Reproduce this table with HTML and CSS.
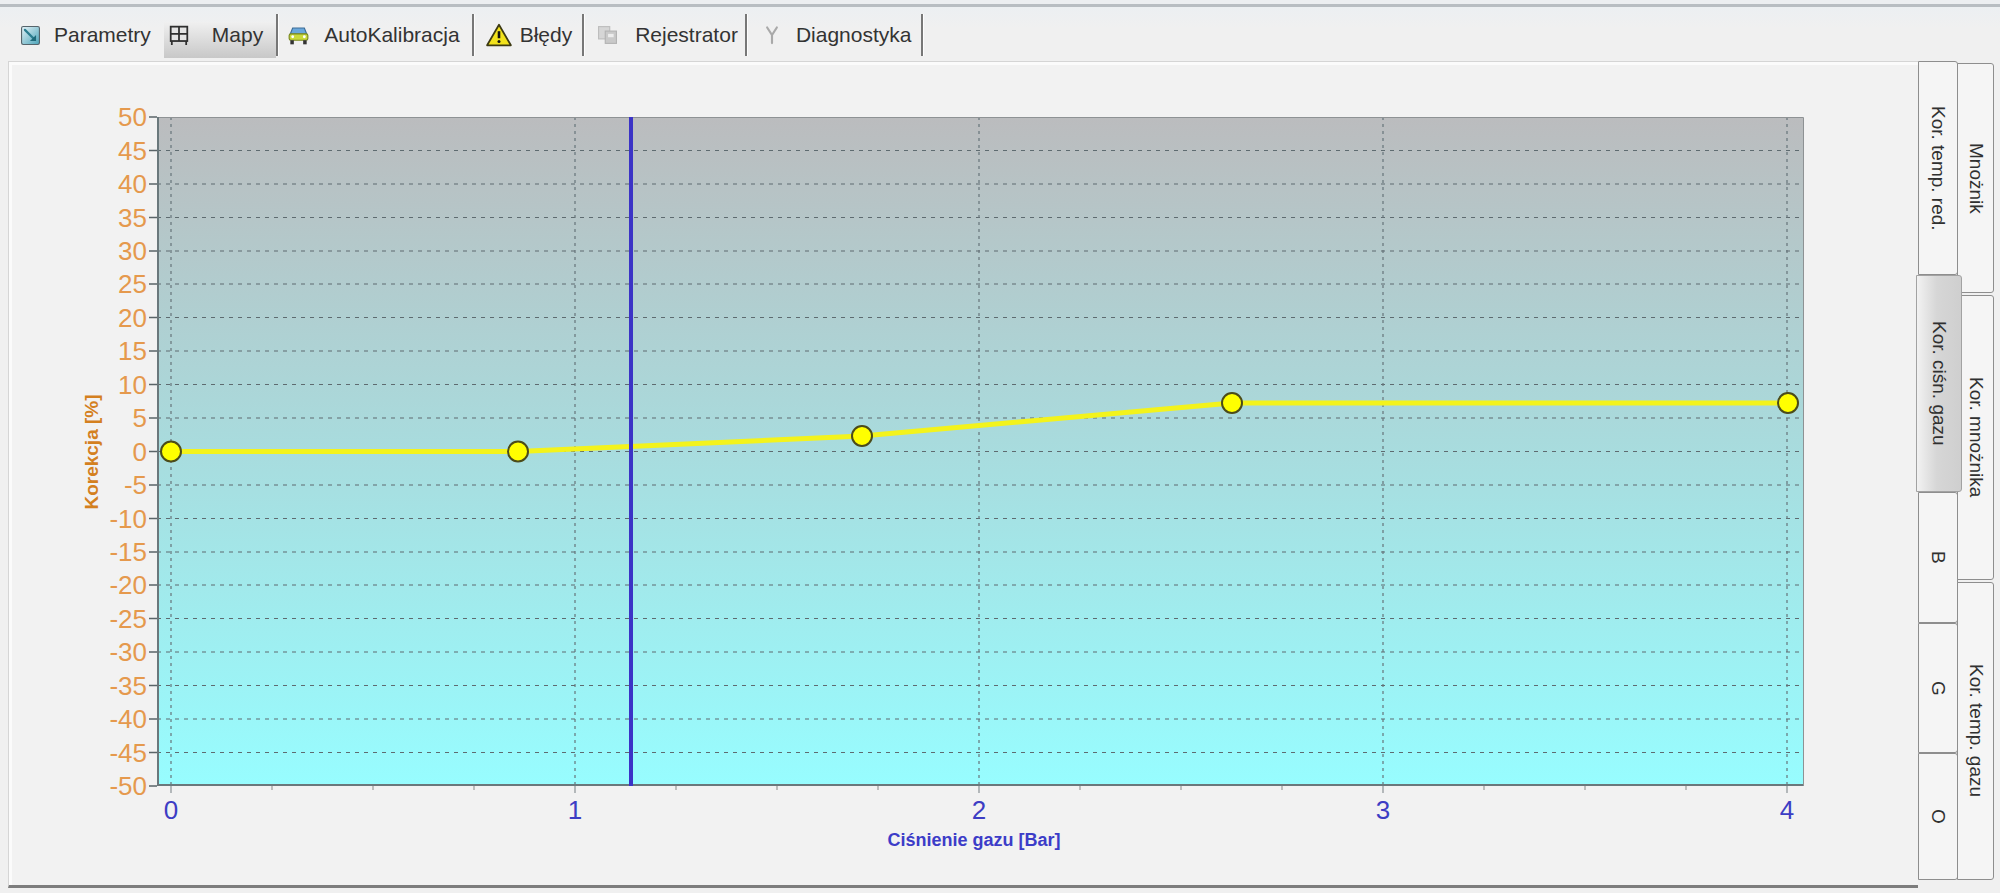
FILE: index.html
```html
<!DOCTYPE html>
<html lang="pl">
<head>
<meta charset="utf-8">
<title>Mapy</title>
<link rel="stylesheet" href="styles.css">
</head>
<body>
<div class="topbar"></div>
<div class="tabstrip">
  <div class="tab t-param">
    <svg class="ico" width="19" height="19" viewBox="0 0 17 17">
      <defs><linearGradient id="gp" x1="0" y1="0" x2="1" y2="1"><stop offset="0" stop-color="#e6f3f8"/><stop offset="1" stop-color="#4aa3b8"/></linearGradient></defs>
      <rect x="0.5" y="0.5" width="16" height="16" rx="1.5" fill="url(#gp)" stroke="#56646b"/>
      <path d="M3.5 3.5L11 11" stroke="#2b7d8f" stroke-width="2" stroke-linecap="round"/>
      <path d="M8 13.5H13.5V8Z" fill="#1f6a7a"/>
    </svg>
    <span>Parametry</span>
  </div>
  <div class="tab t-mapy">
    <svg class="ico" width="20" height="21" viewBox="0 0 18 19">
      <rect x="1.5" y="1.5" width="15" height="13" fill="#e4e4e4" stroke="#2f2f2f" stroke-width="1.6"/>
      <path d="M9 1.5V14.5M1.5 8H16.5M2.5 14.5V18M15.5 14.5V18" stroke="#2f2f2f" stroke-width="1.6"/>
    </svg>
    <span>Mapy</span>
  </div>
  <div class="sep"></div>
  <div class="tab t-auto">
    <svg class="ico" width="21" height="20" viewBox="0 0 18 17">
      <path d="M4 2.5h10l2 5H2z" fill="#6aa8dc" stroke="#3c6c96"/>
      <rect x="1" y="7.5" width="16" height="5.5" rx="1.5" fill="#c9d93a" stroke="#7c8a20"/>
      <rect x="2" y="13" width="3" height="3.5" fill="#333"/>
      <rect x="13" y="13" width="3" height="3.5" fill="#333"/>
      <circle cx="4" cy="10" r="1.2" fill="#fff"/>
      <circle cx="14" cy="10" r="1.2" fill="#fff"/>
    </svg>
    <span>AutoKalibracja</span>
  </div>
  <div class="sep"></div>
  <div class="tab t-bledy">
    <svg class="ico" width="26" height="24" viewBox="0 0 24 22">
      <path d="M12 1.5L23 20.5H1Z" fill="#f2e21c" stroke="#3d3a12" stroke-width="1.6" stroke-linejoin="round"/>
      <path d="M12 7.5V14" stroke="#111" stroke-width="2.4"/>
      <circle cx="12" cy="17" r="1.4" fill="#111"/>
    </svg>
    <span>Błędy</span>
  </div>
  <div class="sep"></div>
  <div class="tab t-rej">
    <svg class="ico" width="19" height="18" viewBox="0 0 17 16">
      <rect x="0.5" y="0.5" width="10" height="11" fill="#d6d6d6" stroke="#bdbdbd"/>
      <rect x="6.5" y="4.5" width="10" height="11" fill="#c9c9c9" stroke="#b3b3b3"/>
      <rect x="9" y="7" width="5" height="3" fill="#ededed"/>
    </svg>
    <span>Rejestrator</span>
  </div>
  <div class="sep"></div>
  <div class="tab t-diag">
    <svg class="ico" width="14" height="20" viewBox="0 0 13 18">
      <path d="M2 2L6.5 9L11 2M6.5 9V16.5" fill="none" stroke="#a9a9a9" stroke-width="2" stroke-linecap="round"/>
    </svg>
    <span>Diagnostyka</span>
  </div>
  <div class="sep"></div>
</div>

<div class="workarea">
  <div class="panel">
    <svg class="chart" width="1909" height="823" viewBox="9 62 1909 823">
      <defs>
        <linearGradient id="plotbg" x1="0" y1="0" x2="0" y2="1">
          <stop offset="0" stop-color="#bbbcbe"/>
          <stop offset="0.5" stop-color="#a8dcde"/>
          <stop offset="1" stop-color="#97fdff"/>
        </linearGradient>
      </defs>
      <rect x="157" y="117" width="1646" height="669" fill="url(#plotbg)"/>
      <path class="hgrid" d="M157 150.5H1803M157 184H1803M157 217.5H1803M157 251H1803M157 284H1803M157 317.5H1803M157 351H1803M157 384.5H1803M157 418H1803M157 451.5H1803M157 485H1803M157 518.5H1803M157 552H1803M157 585H1803M157 618.5H1803M157 652H1803M157 685.5H1803M157 719H1803M157 752.5H1803"/>
      <path class="vgrid" d="M171 117V786M575 117V786M979 117V786M1383 117V786M1787 117V786"/>
      <path class="ytick" d="M149 117h8M149 150.5h8M149 184h8M149 217.5h8M149 251h8M149 284h8M149 317.5h8M149 351h8M149 384.5h8M149 418h8M149 451.5h8M149 485h8M149 518.5h8M149 552h8M149 585h8M149 618.5h8M149 652h8M149 685.5h8M149 719h8M149 752.5h8M149 786h8"/>
      <path class="xtick" d="M272 786v4M373 786v4M474 786v4M676 786v4M777 786v4M878 786v4M1080 786v4M1181 786v4M1282 786v4M1484 786v4M1585 786v4M1686 786v4"/>
      <path class="xtick major" d="M171 786v7M575 786v7M979 786v7M1383 786v7M1787 786v7"/>
      <path class="frame-light" d="M157 117.5H1803.5V786"/>
      <path class="frame-dark" d="M158 117V785H1803"/>

      <polyline class="curve" points="171,451.5 518,451.5 862,436 1232,403 1788,403"/>
      <line class="cursor" x1="631" y1="117" x2="631" y2="786"/>
      <circle class="pt" cx="171" cy="451.5" r="10"/>
      <circle class="pt" cx="518" cy="451.5" r="10"/>
      <circle class="pt" cx="862" cy="436" r="10"/>
      <circle class="pt" cx="1232" cy="403" r="10"/>
      <circle class="pt" cx="1788" cy="403" r="10"/>

      <g class="ylab">
        <text x="147" y="117" dy="0.36em">50</text>
        <text x="147" y="150.5" dy="0.36em">45</text>
        <text x="147" y="184" dy="0.36em">40</text>
        <text x="147" y="217.5" dy="0.36em">35</text>
        <text x="147" y="251" dy="0.36em">30</text>
        <text x="147" y="284" dy="0.36em">25</text>
        <text x="147" y="317.5" dy="0.36em">20</text>
        <text x="147" y="351" dy="0.36em">15</text>
        <text x="147" y="384.5" dy="0.36em">10</text>
        <text x="147" y="418" dy="0.36em">5</text>
        <text x="147" y="451.5" dy="0.36em">0</text>
        <text x="147" y="485" dy="0.36em">-5</text>
        <text x="147" y="518.5" dy="0.36em">-10</text>
        <text x="147" y="552" dy="0.36em">-15</text>
        <text x="147" y="585" dy="0.36em">-20</text>
        <text x="147" y="618.5" dy="0.36em">-25</text>
        <text x="147" y="652" dy="0.36em">-30</text>
        <text x="147" y="685.5" dy="0.36em">-35</text>
        <text x="147" y="719" dy="0.36em">-40</text>
        <text x="147" y="752.5" dy="0.36em">-45</text>
        <text x="147" y="786" dy="0.36em">-50</text>
      </g>
      <g class="xlab">
        <text x="171" y="810" dy="0.36em">0</text>
        <text x="575" y="810" dy="0.36em">1</text>
        <text x="979" y="810" dy="0.36em">2</text>
        <text x="1383" y="810" dy="0.36em">3</text>
        <text x="1787" y="810" dy="0.36em">4</text>
      </g>
      <text class="xtitle" x="974" y="840" dy="0.35em">Ciśnienie gazu [Bar]</text>
      <text class="ytitle" transform="translate(91 452) rotate(-90)" dy="0.35em">Korekcja [%]</text>
    </svg>
  </div>
  <div class="vtabs">
    <div class="vcol inner">
      <div class="vtab h-ktr"><span>Kor. temp. red.</span></div>
      <div class="vtab sel h-kcg"><span>Kor. ciśn. gazu</span></div>
      <div class="vtab h-b"><span>B</span></div>
      <div class="vtab h-g"><span>G</span></div>
      <div class="vtab h-o"><span>O</span></div>
    </div>
    <div class="vcol outer">
      <div class="vtab h-mn"><span>Mnożnik</span></div>
      <div class="vtab h-kmn"><span>Kor. mnożnika</span></div>
      <div class="vtab h-ktg"><span>Kor. temp. gazu</span></div>
    </div>
  </div>
</div>
</body>
</html>
```

FILE: styles.css
```css
* { box-sizing: border-box; }
html, body { margin: 0; padding: 0; }
body {
  width: 2000px;
  height: 893px;
  overflow: hidden;
  background: #f0f0f0;
  font-family: "Liberation Sans", Arial, sans-serif;
  color: #323232;
}

.topbar {
  height: 7px;
  background: #eceef1;
  border-bottom: 3px solid #b8bdc2;
}

.tabstrip {
  height: 54px;
  display: flex;
  align-items: flex-end;
  padding: 0 0 3px 21px;
  background: linear-gradient(#eceff2, #f0f0f0 40%);
}

.tab {
  height: 36px;
  display: flex;
  align-items: center;
  padding-bottom: 10px;
  font-size: 21px;
  white-space: nowrap;
  color: #333;
}
.tab .ico { flex: none; display: block; }

.t-param { gap: 14px; padding-right: 13px; }
.t-mapy {
  gap: 23px;
  padding-left: 5px;
  padding-right: 13px;
  background: linear-gradient(#f0f0f0, #c8c8c8);
}
.t-auto { gap: 15px; padding-left: 9px; padding-right: 12px; }
.t-bledy { gap: 8px; padding-left: 11px; padding-right: 10px; }
.t-rej { gap: 18px; padding-left: 13px; padding-right: 7px; }
.t-diag { gap: 17px; padding-left: 17px; padding-right: 10px; }

.sep {
  width: 3px;
  height: 42px;
  margin-bottom: 2px;
  border-left: 2px solid #777;
  border-right: 1px solid #fdfdfd;
  flex: none;
}

.workarea {
  display: flex;
  height: 832px;
}

.panel {
  width: 1910px;
  flex: none;
  margin-left: 8px;
  margin-bottom: 5px;
  border-top: 1px solid #d5d5d5;
  border-left: 1px solid #d5d5d5;
  border-bottom: 3px solid #7d7d7d;
  background: #f2f2f2;
  box-shadow: inset 3px 3px 0 #fbfbfb;
}

.chart { display: block; }

.hgrid { fill: none; stroke: #5e6b70; stroke-width: 1.2; stroke-dasharray: 4 5; }
.vgrid { fill: none; stroke: #66747a; stroke-width: 1.2; stroke-dasharray: 3 4; }
.ytick { stroke: #5a6468; stroke-width: 1.4; }
.xtick { stroke: #9a9a9a; stroke-width: 1.2; }
.xtick.major { stroke: #8a9296; }
.frame-light { fill: none; stroke: #8e9294; stroke-width: 1; }
.frame-dark { fill: none; stroke: #6a787c; stroke-width: 2; }

.curve { fill: none; stroke: #f3f31c; stroke-width: 5; stroke-linejoin: round; }
.cursor { stroke: #3b33c6; stroke-width: 4; }
.pt { fill: #ffff00; stroke: #4b4b1a; stroke-width: 2; }

.ylab text {
  font-family: "Liberation Sans", Arial, sans-serif;
  font-size: 26px;
  fill: #e5994d;
  text-anchor: end;
}
.xlab text {
  font-family: "Liberation Sans", Arial, sans-serif;
  font-size: 26px;
  fill: #3d3dc4;
  text-anchor: middle;
}
.xtitle {
  font-family: "Liberation Sans", Arial, sans-serif;
  font-size: 18px;
  font-weight: bold;
  fill: #3c3cc8;
  text-anchor: middle;
}
.ytitle {
  font-family: "Liberation Sans", Arial, sans-serif;
  font-size: 19px;
  font-weight: bold;
  fill: #d4801f;
  text-anchor: middle;
}

.vtabs {
  width: 82px;
  flex: none;
  display: flex;
  padding-right: 6px;
}
.vcol { display: flex; flex-direction: column; }
.vcol.inner { width: 40px; }
.vcol.outer { width: 37px; margin-left: -1px; margin-top: 2px; gap: 2px; }

.vtab {
  flex: none;
  display: flex;
  align-items: center;
  justify-content: center;
  border: 1px solid #8e8e8e;
  border-radius: 0 3px 3px 0;
  background: #f5f5f5;
  font-size: 19px;
  color: #303030;
  white-space: nowrap;
}
.vtab span { writing-mode: vertical-rl; }
.vtab.sel {
  margin-left: -2px;
  margin-right: -4px;
  position: relative;
  z-index: 1;
  border-color: #a2a2a2;
  background: linear-gradient(to right, #f2f2f2, #d6d6d6 45%, #cfcfcf);
}

.h-ktr { height: 214px; }
.h-kcg { height: 217px; }
.h-b { height: 131px; }
.h-g { height: 130px; }
.h-o { height: 127px; }
.h-mn { height: 230px; }
.h-kmn { height: 285px; }
.h-ktg { height: 298px; }
```
